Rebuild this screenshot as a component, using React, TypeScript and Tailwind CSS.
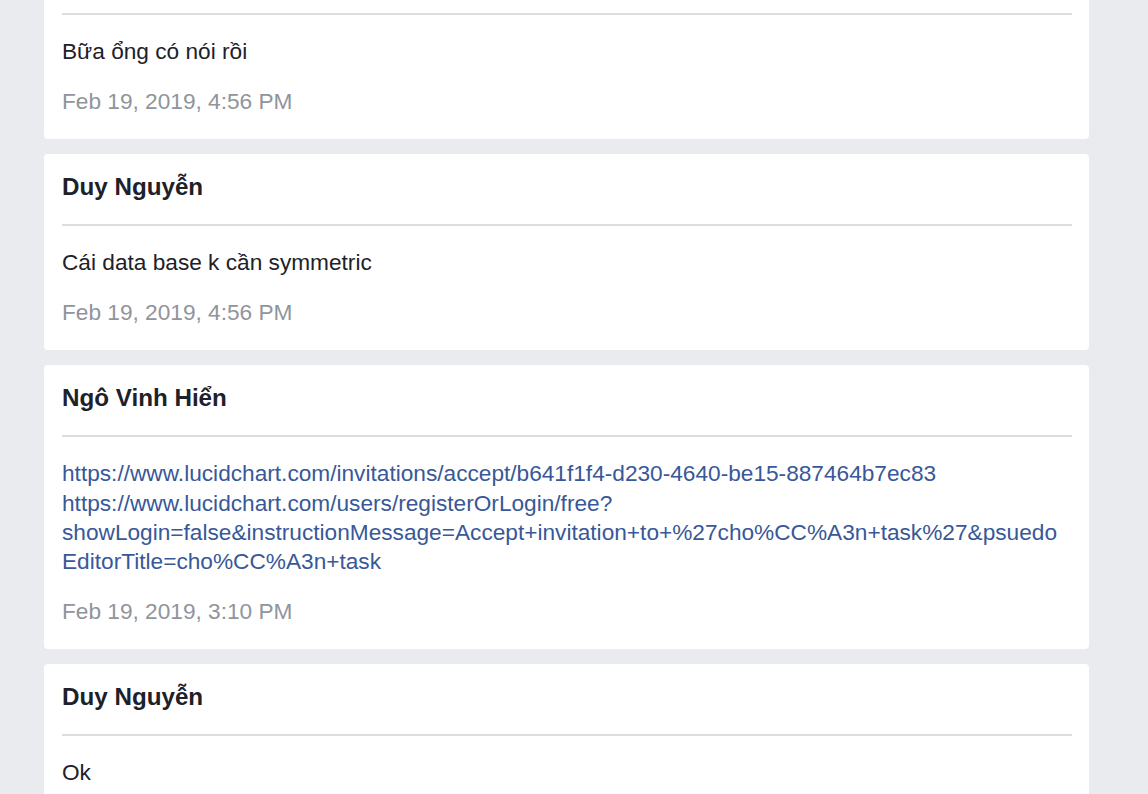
import React from "react";

type Message = {
  id: number;
  author: string;
  lines: string[];
  link?: boolean;
  time: string;
};

const messages: Message[] = [
  {
    id: 1,
    author: "Ngô Vinh Hiển",
    lines: ["Bữa ổng có nói rồi"],
    time: "Feb 19, 2019, 4:56 PM",
  },
  {
    id: 2,
    author: "Duy Nguyễn",
    lines: ["Cái data base k cần symmetric"],
    time: "Feb 19, 2019, 4:56 PM",
  },
  {
    id: 3,
    author: "Ngô Vinh Hiển",
    link: true,
    lines: [
      "https://www.lucidchart.com/invitations/accept/b641f1f4-d230-4640-be15-887464b7ec83",
      "https://www.lucidchart.com/users/registerOrLogin/free?",
      "showLogin=false&instructionMessage=Accept+invitation+to+%27cho%CC%A3n+task%27&psuedo",
      "EditorTitle=cho%CC%A3n+task",
    ],
    time: "Feb 19, 2019, 3:10 PM",
  },
  {
    id: 4,
    author: "Duy Nguyễn",
    lines: ["Ok"],
    time: "Feb 19, 2019, 3:10 PM",
  },
];

export default function App() {
  return (
    <div
      className="h-[794px] w-[1148px] overflow-hidden bg-[#e9ebee]"
      style={{ fontFamily: '"Liberation Sans", Arial, sans-serif' }}
    >
      <div className="-mt-[57px] ml-[44px] flex w-[1045px] flex-col gap-[15px]">
        {messages.map((m) => (
          <MessageCard key={m.id} {...m} />
        ))}
      </div>
    </div>
  );
}

const MessageCard = ({ author, lines, link, time }: Message) => {
  return (
    <div className="rounded-[4px] bg-white pb-[23px] pl-[18px] pr-[17px] pt-[18px]">
      <h3 className="pb-[22px] text-[24.2px] font-bold leading-[30px] text-[#1d2129]">
        {author}
      </h3>
      <div className="h-[2px] bg-[#dadde1]" />
      <div
        className={`mt-[22px] text-[22.67px] leading-[29.33px] ${
          link ? "text-[#385898]" : "text-[#1d2129]"
        }`}
      >
        {lines.map((l, i) => (
          <div key={i} className="whitespace-nowrap">
            {l}
          </div>
        ))}
      </div>
      <p className="mt-[20.5px] text-[22.67px] leading-[29.33px] text-[#90949c]">
        {time}
      </p>
    </div>
  );
};
